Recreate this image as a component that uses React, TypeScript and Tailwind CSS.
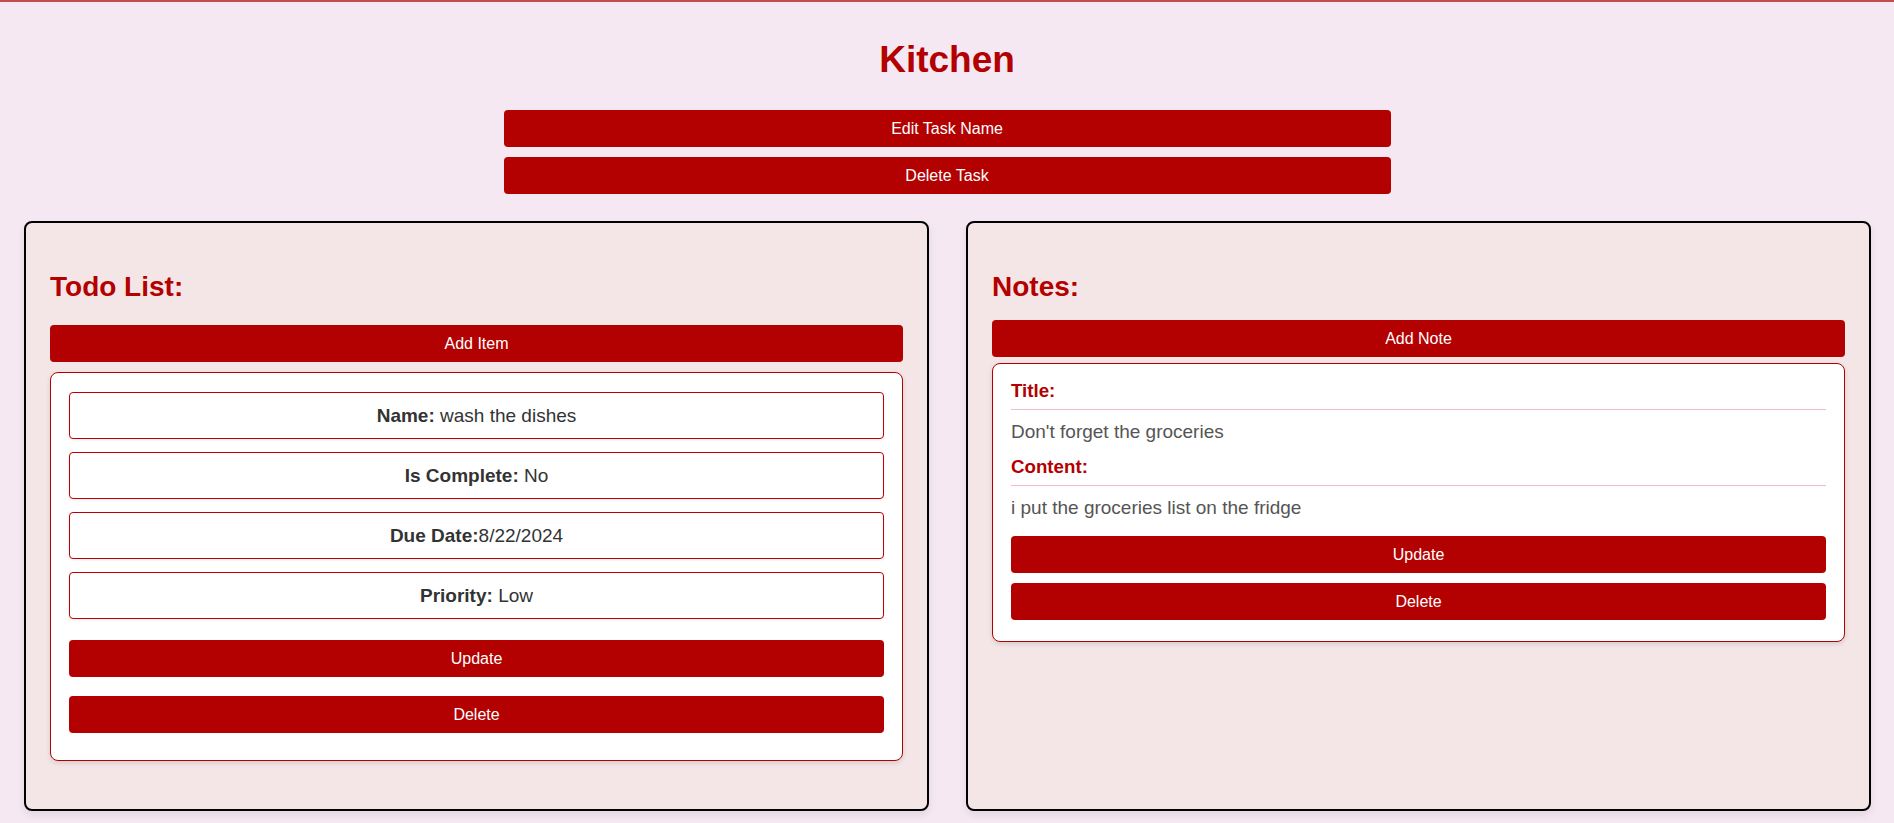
const btn =
  'block w-full h-[37px] rounded-[4px] bg-[#b30000] text-white text-[16px] leading-[18px] cursor-pointer';

function Field({ label, value, sep = ' ' }: { label: string; value: string; sep?: string }) {
  return (
    <div className="flex h-[47px] items-center justify-center rounded-[4px] border border-[#c00000] bg-white text-[19px] leading-[22px] text-[#333] shadow-[0_1px_3px_rgba(0,0,0,0.08)]">
      <span>
        <strong className="font-bold">{label}</strong>
        {sep}
        {value}
      </span>
    </div>
  );
}

function TodoPanel() {
  return (
    <section className="flex-1 rounded-[8px] border-2 border-black bg-[#f4e6e7] px-[24px] pt-[24px] pb-[48px] shadow-[0_4px_8px_rgba(0,0,0,0.08)]">
      <h2 className="mt-[24px] mb-[22px] text-[28px] leading-[32px] font-bold text-[#b30000]">Todo List:</h2>
      <button className={btn}>Add Item</button>
      <div className="mt-[10px] rounded-[8px] border border-[#b30000] bg-white px-[18px] pt-[19px] pb-[27px] shadow-[0_2px_5px_rgba(0,0,0,0.12)]">
        <div className="flex flex-col gap-[13px]">
          <Field label="Name:" value="wash the dishes" />
          <Field label="Is Complete:" value="No" />
          <Field label="Due Date:" value="8/22/2024" sep="" />
          <Field label="Priority:" value="Low" />
        </div>
        <button className={`${btn} mt-[21px]`}>Update</button>
        <button className={`${btn} mt-[19px]`}>Delete</button>
      </div>
    </section>
  );
}

function NotesPanel() {
  return (
    <section className="flex-1 rounded-[8px] border-2 border-black bg-[#f4e6e7] px-[24px] pt-[24px] pb-[48px] shadow-[0_4px_8px_rgba(0,0,0,0.08)]">
      <h2 className="mt-[24px] mb-[17px] text-[28px] leading-[32px] font-bold text-[#b30000]">Notes:</h2>
      <button className={btn}>Add Note</button>
      <div className="mt-[6px] rounded-[8px] border border-[#b30000] bg-white px-[18px] pt-[16px] pb-[21px] shadow-[0_2px_5px_rgba(0,0,0,0.12)]">
        <h3 className="border-b border-[#f2bcc6] pb-[8px] text-[18.72px] leading-[21px] font-bold text-[#b30000]">Title:</h3>
        <p className="mt-[11px] text-[19px] leading-[22px] text-[#555]">Don't forget the groceries</p>
        <h3 className="mt-[13px] border-b border-[#f2bcc6] pb-[8px] text-[18.72px] leading-[21px] font-bold text-[#b30000]">Content:</h3>
        <p className="mt-[11px] text-[19px] leading-[22px] text-[#555]">i put the groceries list on the fridge</p>
        <button className={`${btn} mt-[17px]`}>Update</button>
        <button className={`${btn} mt-[10px]`}>Delete</button>
      </div>
    </section>
  );
}

export default function App() {
  return (
    <div className="min-h-screen border-t-2 border-[#c0504f] bg-[#f5e8f2] pb-[12px] font-['Liberation_Sans',Arial,sans-serif]">
      <h1 className="pt-[37px] text-center text-[37px] leading-[42px] font-bold text-[#b30000]">Kitchen</h1>
      <div className="mx-auto mt-[29px] flex w-[887px] flex-col gap-[10px]">
        <button className={btn}>Edit Task Name</button>
        <button className={btn}>Delete Task</button>
      </div>
      <div className="mt-[27px] flex gap-[37px] pl-[24px] pr-[23px]">
        <TodoPanel />
        <NotesPanel />
      </div>
    </div>
  );
}
